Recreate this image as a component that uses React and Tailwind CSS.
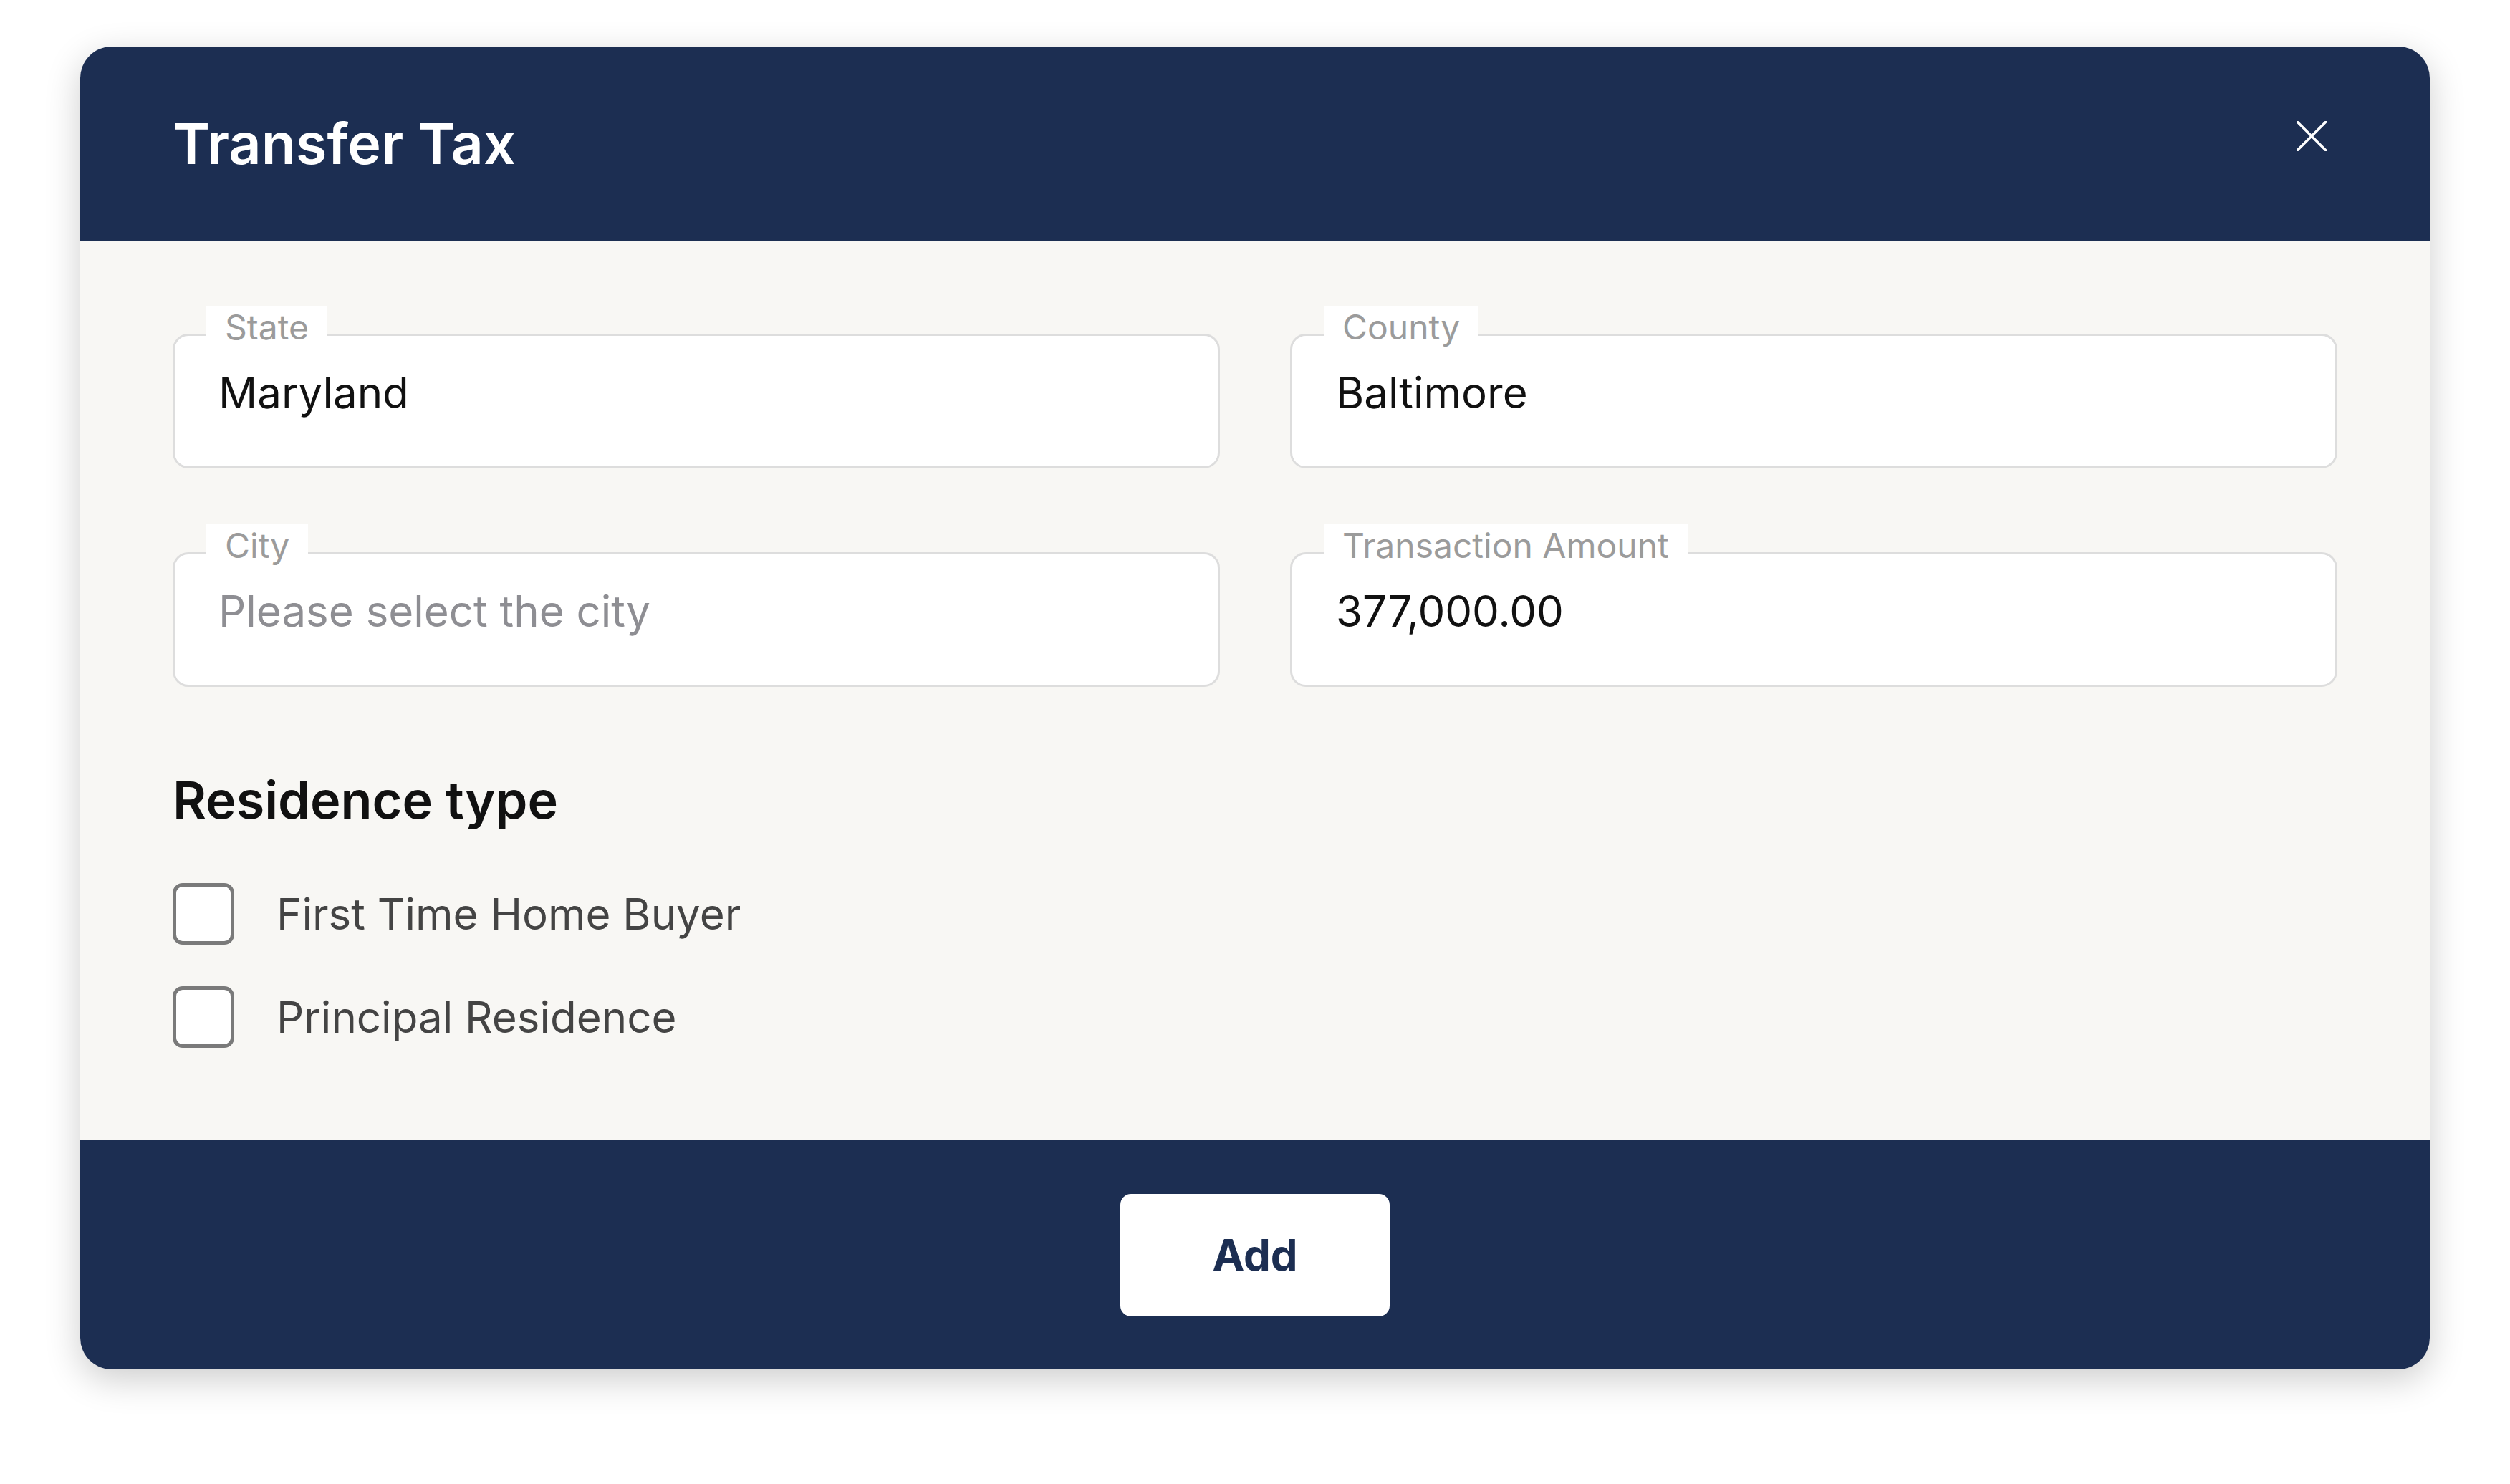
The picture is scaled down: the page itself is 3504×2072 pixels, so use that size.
import { useState } from 'react'

const fields = [
  { label: 'State', value: 'Maryland' },
  { label: 'County', value: 'Baltimore' },
  { label: 'City', value: '', placeholder: 'Please select the city' },
  { label: 'Transaction Amount', value: '377,000.00' }
]

const residenceTypes = ['First Time Home Buyer', 'Principal Residence']

function Field({ label, value, placeholder }) {
  return (
    <div className="relative h-[188px] rounded-[22px] border-[3px] border-[#dddddd] bg-white pl-[61px] pt-[43px]">
      {/* label sits over the top border */}
      <span className="absolute left-[44px] top-[-42px] h-[60px] bg-white px-[26px] text-[48px] leading-[60px] text-[#9b9b9b]">
        {label}
      </span>
      {value ? (
        <p className="text-[60px] leading-[72px] text-[#111111]">{value}</p>
      ) : (
        <p className="text-[60px] leading-[72px] text-[#8e8e93]">{placeholder}</p>
      )}
    </div>
  )
}

function Checkbox({ label, checked, onToggle }) {
  return (
    <label className="flex cursor-pointer items-center gap-[59px]" onClick={onToggle}>
      <span className="flex h-[86px] w-[86px] items-center justify-center rounded-[14px] border-[5px] border-[#7a7a7a] bg-white">
        {checked && (
          <svg width="50" height="50" viewBox="0 0 24 24" fill="none" stroke="#1c2e52" strokeWidth="3">
            <path d="M4 12l5 5L20 6" />
          </svg>
        )}
      </span>
      <span className="text-[60px] leading-[72px] text-[#444444]">{label}</span>
    </label>
  )
}

export default function App() {
  const [checked, setChecked] = useState({})

  const toggle = (name) => setChecked((prev) => ({ ...prev, [name]: !prev[name] }))

  return (
    <div className="min-h-screen bg-white px-[112px] pt-[65px] pb-[161px] font-['Inter',sans-serif]">
      <div className="overflow-hidden rounded-[44px] shadow-[0_14px_50px_rgba(0,0,0,0.2)]">

        {/* HEADER */}
        <header className="flex h-[271px] items-center justify-between bg-[#1c2e52] pl-[129px] pr-[144px]">
          <h1 className="text-[79px] font-semibold leading-none text-white">Transfer Tax</h1>
          <button className="mb-[22px] h-[42px] w-[42px]">
            <svg width="42" height="42" viewBox="0 0 42 42" stroke="#ffffff" strokeWidth="3.5">
              <path d="M0 0L42 42M42 0L0 42" />
            </svg>
          </button>
        </header>

        {/* BODY */}
        <section className="bg-[#f8f7f4] px-[129px] pt-[130px] pb-[129px]">
          <div className="grid grid-cols-2 gap-x-[98px] gap-y-[117px]">
            {fields.map((f) => (
              <Field key={f.label} {...f} />
            ))}
          </div>

          <h2 className="mt-[115px] text-[72px] font-semibold leading-[86px] text-[#111111]">
            Residence type
          </h2>

          <div className="mt-[73px] flex flex-col gap-[58px]">
            {residenceTypes.map((name) => (
              <Checkbox key={name} label={name} checked={!!checked[name]} onToggle={() => toggle(name)} />
            ))}
          </div>
        </section>

        {/* FOOTER */}
        <footer className="flex h-[320px] items-center justify-center bg-[#1c2e52]">
          <button className="h-[171px] w-[376px] rounded-[15px] bg-white text-[60px] font-bold text-[#1c2e52]">
            Add
          </button>
        </footer>
      </div>
    </div>
  )
}
